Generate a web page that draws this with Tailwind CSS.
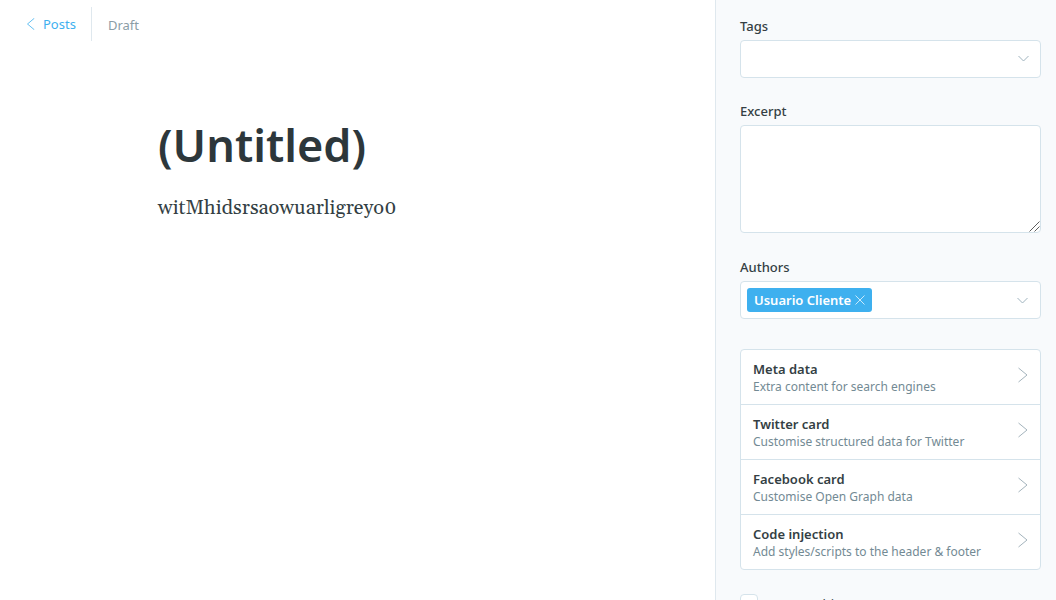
<!DOCTYPE html>
<html lang="en">
<head>
<meta charset="utf-8">
<meta name="viewport" content="width=device-width, initial-scale=1">
<title>Post editor</title>
<script src="https://cdn.jsdelivr.net/npm/@tailwindcss/browser@4"></script>
</head>
<body class="flex h-screen overflow-hidden bg-white font-['Noto_Sans','Open_Sans',sans-serif] text-[13px] text-[#343f44]">
  <main class="min-w-0 flex-1">
    <header class="flex items-center pt-[7px] pl-[26px]">
      <a href="#" class="flex h-[34px] items-center gap-2 border-r border-[#dfe8ee] pr-[15px] text-[#3eb0ef]">
        <svg class="h-3 w-[9px]" viewBox="0 0 9 12" fill="none" stroke="currentColor" stroke-width="0.8" stroke-linecap="round" stroke-linejoin="round" aria-hidden="true"><path d="M8 .5 1.500 6 8 11.500"/></svg>
        <span class="pt-px">Posts</span>
      </a>
      <span class="pt-[3px] pl-4 text-[#8b9da6]">Draft</span>
    </header>
    <article class="px-[158px] pt-[71px]">
      <h1 class="text-[45px] leading-[66px] font-semibold text-[#2d373b]">(Untitled)</h1>
      <p class="pt-[14px] font-[Gelasio,Georgia,'Liberation_Serif',serif] text-[20px] leading-8 text-[#343f44]">witMhidsrsaowuarligreyo0</p>
    </article>
  </main>

  <aside class="w-[341px] shrink-0 overflow-hidden border-l border-[#dfe8ee] bg-[#f8fafc] pt-[17px] pr-[15px] pl-6">
    <div class="mb-6">
      <label for="tags" class="mb-1 block leading-[19px] font-medium">Tags</label>
      <div class="relative">
        <select id="tags" class="block h-[38px] w-full appearance-none rounded-[4px] border border-[#d5e3eb] bg-white px-3"><option></option></select>
        <svg class="pointer-events-none absolute top-[15px] right-3 h-[7px] w-[11px]" viewBox="0 0 11 7" fill="none" stroke="#9fb3be" aria-hidden="true"><path d="m.5 1 5 5 5-5"/></svg>
      </div>
    </div>
    <div class="mb-[25px]">
      <label for="excerpt" class="mb-1 block leading-[19px] font-medium">Excerpt</label>
      <div class="relative">
        <textarea id="excerpt" class="block h-[108px] w-full resize-none rounded-[4px] border border-[#d5e3eb] bg-white px-3 py-2"></textarea>
        <svg class="pointer-events-none absolute right-px bottom-px h-[11px] w-[11px]" viewBox="0 0 11 11" fill="none" stroke="#4d4d4d" stroke-width="0.9" aria-hidden="true"><path d="M.5 10.500 10.500.5M5.500 10.500l5-5"/></svg>
      </div>
    </div>
    <div class="mb-[30px]">
      <label for="authors" class="mb-1 block leading-[19px] font-medium">Authors</label>
      <div class="flex h-[38px] items-center rounded-[4px] border border-[#d5e3eb] bg-white pr-3 pl-[6px]">
        <span class="flex h-6 items-center gap-1 rounded-[3px] bg-[#3eb0ef] px-[7px] font-semibold whitespace-nowrap text-white"><span class="pt-px">Usuario Cliente</span>
          <button type="button" aria-label="Remove Usuario Cliente"><svg class="h-[10px] w-[10px]" viewBox="0 0 10 10" fill="none" stroke="#d8effc" stroke-width="0.9" aria-hidden="true"><path d="m.5.5 9 9m0-9-9 9"/></svg></button>
        </span>
        <input id="authors" type="text" class="min-w-0 flex-1 outline-none">
        <svg class="h-[7px] w-[11px]" viewBox="0 0 11 7" fill="none" stroke="#9fb3be" aria-hidden="true"><path d="m.5 1 5 5 5-5"/></svg>
      </div>
    </div>

    <div class="mb-6 divide-y divide-[#d5e3eb] rounded-[4px] border border-[#d5e3eb] bg-white">
      <button type="button" class="flex w-full items-start justify-between pt-[10px] pr-3 pb-[10px] pl-3 text-left">
        <span><span class="block leading-[19px] font-semibold">Meta data</span><span class="block text-xs leading-[15px] text-[#738a94]">Extra content for search engines</span></span>
        <svg class="mt-[7px] h-4 w-[10px]" viewBox="0 0 10 16" fill="none" stroke="#9aabb4" stroke-width="0.9" aria-hidden="true"><path d="m.5 1 8.500 7-8.500 7"/></svg>
      </button>
      <button type="button" class="flex w-full items-start justify-between pt-[10px] pr-3 pb-[10px] pl-3 text-left">
        <span><span class="block leading-[19px] font-semibold">Twitter card</span><span class="block text-xs leading-[15px] text-[#738a94]">Customise structured data for Twitter</span></span>
        <svg class="mt-[7px] h-4 w-[10px]" viewBox="0 0 10 16" fill="none" stroke="#9aabb4" stroke-width="0.9" aria-hidden="true"><path d="m.5 1 8.500 7-8.500 7"/></svg>
      </button>
      <button type="button" class="flex w-full items-start justify-between pt-[10px] pr-3 pb-[10px] pl-3 text-left">
        <span><span class="block leading-[19px] font-semibold">Facebook card</span><span class="block text-xs leading-[15px] text-[#738a94]">Customise Open Graph data</span></span>
        <svg class="mt-[7px] h-4 w-[10px]" viewBox="0 0 10 16" fill="none" stroke="#9aabb4" stroke-width="0.9" aria-hidden="true"><path d="m.5 1 8.500 7-8.500 7"/></svg>
      </button>
      <button type="button" class="flex w-full items-start justify-between pt-[10px] pr-3 pb-[10px] pl-3 text-left">
        <span><span class="block leading-[19px] font-semibold">Code injection</span><span class="block text-xs leading-[15px] text-[#738a94]">Add styles/scripts to the header &amp; footer</span></span>
        <svg class="mt-[7px] h-4 w-[10px]" viewBox="0 0 10 16" fill="none" stroke="#9aabb4" stroke-width="0.9" aria-hidden="true"><path d="m.5 1 8.500 7-8.500 7"/></svg>
      </button>
    </div>

    <label for="feature" class="flex items-start gap-[10px]">
      <input id="feature" type="checkbox" class="h-[18px] w-[18px] appearance-none rounded-[4px] border border-[#d5e3eb] bg-white">
      <span class="leading-5">Feature this post</span>
    </label>
  </aside>
</body>
</html>
